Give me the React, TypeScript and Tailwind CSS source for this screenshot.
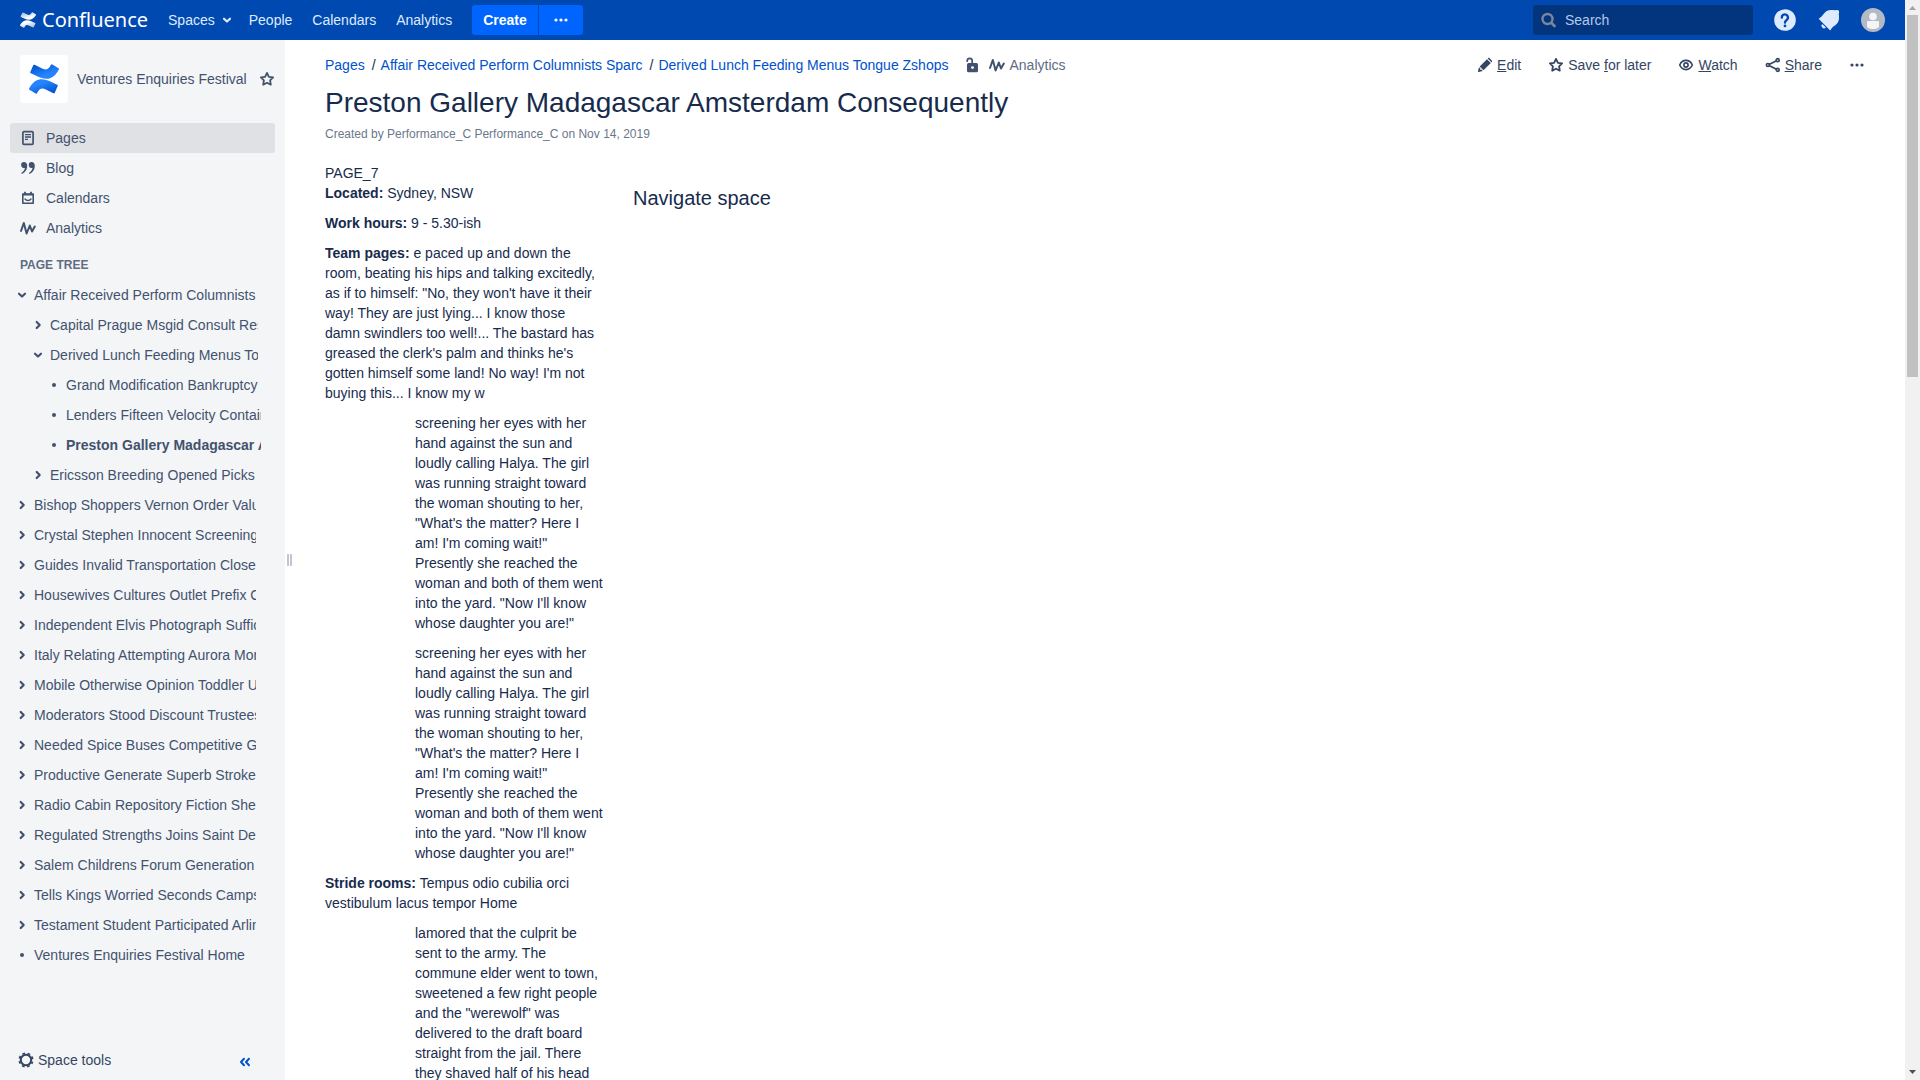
import React from "react";

type IconProps = { className?: string };

const markTop =
  "M23.131 5.743c.249-.405.531-.875.764-1.25a.764.764 0 0 0-.256-1.034L18.675.404a.764.764 0 0 0-1.058.26c-.195.335-.451.763-.734 1.225-1.966 3.246-3.945 2.85-7.508 1.146L4.437.694a.764.764 0 0 0-1.027.382L1.046 6.422a.764.764 0 0 0 .382 1c1.039.49 3.105 1.467 4.965 2.361 6.698 3.246 12.392 3.029 16.738-4.04z";
const markBottom =
  "M.87 18.257c-.248.382-.53.875-.763 1.245a.764.764 0 0 0 .255 1.04l4.965 3.054a.764.764 0 0 0 1.058-.26c.199-.332.454-.763.733-1.221 1.967-3.247 3.945-2.853 7.508-1.146l4.957 2.337a.764.764 0 0 0 1.028-.382l2.364-5.346a.764.764 0 0 0-.382-1 599.851 599.851 0 0 1-4.965-2.361C10.911 10.97 5.224 11.185.87 18.257z";

function ConfluenceMark({ id, dark, light, className }: { id: string; dark: string; light: string; className: string }) {
  return (
    <svg viewBox="0 0 24 24" className={"shrink-0 " + className} aria-hidden="true">
      <defs>
        <linearGradient id={id + "-a"} x1="0" y1="0" x2="0.7" y2="1">
          <stop offset="0.1" stopColor={dark} />
          <stop offset="0.75" stopColor={light} />
        </linearGradient>
        <linearGradient id={id + "-b"} x1="1" y1="1" x2="0.3" y2="0">
          <stop offset="0.1" stopColor={dark} />
          <stop offset="0.75" stopColor={light} />
        </linearGradient>
      </defs>
      <path d={markTop} fill={`url(#${id}-a)`} />
      <path d={markBottom} fill={`url(#${id}-b)`} />
    </svg>
  );
}

function Svg({ className = "size-4", children }: { className?: string; children: React.ReactNode }) {
  return (
    <svg
      viewBox="0 0 16 16"
      className={"shrink-0 " + className}
      fill="none"
      stroke="currentColor"
      strokeWidth="2"
      strokeLinecap="round"
      strokeLinejoin="round"
      aria-hidden="true"
    >
      {children}
    </svg>
  );
}

const ChevronDown = ({ className }: IconProps) => (
  <Svg className={className}>
    <path strokeWidth="2.2" d="M5 6.7 8 9.5l3-2.8" />
  </Svg>
);
const ChevronRight = ({ className }: IconProps) => (
  <Svg className={className}>
    <path strokeWidth="2.2" d="M6.7 5 9.7 8l-3 3" />
  </Svg>
);
const Bullet = () => (
  <Svg>
    <circle cx="8" cy="8" r="2" fill="currentColor" stroke="none" />
  </Svg>
);
const Dots = () => (
  <Svg>
    <g fill="currentColor" stroke="none">
      <circle cx="3" cy="8" r="1.6" />
      <circle cx="8" cy="8" r="1.6" />
      <circle cx="13" cy="8" r="1.6" />
    </g>
  </Svg>
);
const Star = () => (
  <Svg>
    <path strokeWidth="1.8" d="m8 1.9 1.900 3.900 4.200.600-3 3 .700 4.300L8 11.700l-3.800 2 .700-4.300-3-3 4.200-.600z" />
  </Svg>
);
const PageIcon = () => (
  <Svg>
    <rect x="2.900" y="1.700" width="10.200" height="12.600" rx="1" strokeWidth="1.700" />
    <path strokeWidth="1.300" strokeLinecap="butt" d="M5 4.700h6M5 7h6M5 9.300h3" />
  </Svg>
);
const QuoteIcon = () => (
  <Svg>
    <g fill="currentColor" stroke="none">
      <path d="M4 2a3 3 0 1 0 .9 5.900C4.700 9.800 3.500 11.400 1.600 12.700c-.5.400-.2 1.300.5 1.100C5.400 12.600 7.300 9.300 7.200 5.600 7.200 3.500 5.900 2 4 2z" />
      <path d="M11.600 2a3 3 0 1 0 .9 5.900c-.2 1.900-1.400 3.500-3.300 4.800-.5.400-.2 1.300.5 1.100 3.300-1.200 5.200-4.500 5.100-8.200C14.800 3.500 13.500 2 11.600 2z" />
    </g>
  </Svg>
);
const CalendarIcon = () => (
  <Svg>
    <path strokeWidth="1.600" d="M2.800 4h10.400v9.200H2.800z" />
    <path strokeWidth="1.800" strokeLinecap="butt" d="M2.800 4.700h10.400M5 1.800V4M11 1.800V4" />
    <path strokeWidth="1.400" d="M5 9c1.500 2 4.500 2 6 0" />
  </Svg>
);
const AnalyticsIcon = () => (
  <Svg>
    <path strokeWidth="2" d="M1 11 3.800 3l2.800 10.500L9.800 5.500l2.200 6L14.800 6.500" />
  </Svg>
);
const UnlockIcon = () => (
  <Svg>
    <rect x="2" y="6" width="11" height="9.200" rx="1.500" fill="currentColor" stroke="none" />
    <path strokeWidth="1.700" d="M2.200 4.200v-.4a2.500 2.500 0 0 1 5 0V6.500" />
    <circle cx="7.500" cy="10.600" r="1.400" fill="#fff" stroke="none" />
  </Svg>
);
const PencilIcon = () => (
  <Svg>
    <g fill="currentColor" stroke="none">
      <path d="M10 2.200 13.800 6 6.500 13.300 2.700 9.500z" />
      <path d="m10.700 1.500.4-.4c.5-.4 1-.4 1.500.1l2.200 2.200c.5.500.5 1 .1 1.500l-.400.400z" />
      <path d="m2 10.200 3.800 3.800-4.100.900c-.500.100-.800-.200-.700-.700z" />
    </g>
    <circle cx="3.600" cy="12.600" r=".5" fill="#fff" stroke="none" />
  </Svg>
);
const EyeIcon = () => (
  <Svg>
    <path strokeWidth="1.600" d="M1.700 8c1.300-3 3.600-4.600 6.300-4.600S13 5 14.300 8c-1.300 3-3.600 4.600-6.300 4.600S3 11 1.700 8z" />
    <circle cx="8" cy="8" r="2.100" strokeWidth="1.600" />
  </Svg>
);
const ShareIcon = () => (
  <Svg>
    <g strokeWidth="1.700">
      <path d="m4.500 7.200 6.500-3.300M4.500 8.800l6.500 3.300" />
      <circle cx="2.900" cy="8" r="1.500" />
      <circle cx="12.700" cy="3.200" r="1.500" />
      <circle cx="12.700" cy="12.800" r="1.500" />
    </g>
  </Svg>
);
const GearIcon = () => (
  <Svg>
    <circle cx="8" cy="8" r="5.200" strokeWidth="2" />
    <circle cx="8" cy="8" r="6.700" strokeWidth="1.700" strokeLinecap="butt" strokeDasharray="2.762 2.500" strokeDashoffset="1.300" transform="rotate(22.500 8 8)" />
  </Svg>
);

const topNav = ["People", "Calendars", "Analytics"];

function Header() {
  return (
    <header className="flex h-10 shrink-0 items-center gap-5 bg-[#0049b0] px-5 text-[#deebff]">
      <a href="#" aria-label="Confluence home" className="flex items-center gap-1.5 text-white">
        <ConfluenceMark id="top" dark="#9fbbe3" light="#ffffff" className="size-4" />
        <span className="font-['Noto_Sans',sans-serif] text-[20px] leading-10">Confluence</span>
      </a>
      <nav className="flex items-center gap-5" aria-label="Main">
        <a href="#" className="flex items-center gap-1">
          Spaces
          <ChevronDown className="size-4 -mr-1.5" />
        </a>
        {topNav.map((label) => (
          <a key={label} href="#">
            {label}
          </a>
        ))}
      </nav>
      <div className="flex gap-px">
        <button className="h-[30px] rounded-l-[3px] bg-[#0065ff] px-[11px] font-bold text-white">Create</button>
        <button aria-label="More create options" className="flex h-[30px] items-center rounded-r-[3px] bg-[#0065ff] px-[14px] text-white">
          <Dots />
        </button>
      </div>
      <form role="search" className="ml-auto flex h-[30px] w-[220px] items-center gap-2 rounded-[3px] bg-[#03357f] pl-2" onSubmit={(e) => e.preventDefault()}>
        <svg viewBox="0 0 16 16" className="size-4 shrink-0" fill="none" stroke="#7a869a" strokeWidth="2.400" strokeLinecap="round" aria-hidden="true">
          <circle cx="6.500" cy="7" r="5" />
          <path d="m10.500 11 3 3" strokeWidth="2.800" />
        </svg>
        <input aria-label="Search" placeholder="Search" className="w-full min-w-0 bg-transparent outline-none placeholder:text-[#b3c8ea]" />
      </form>
      <button aria-label="Help" className="flex size-6 items-center justify-center">
        <svg viewBox="0 0 24 24" className="size-6" aria-hidden="true">
          <circle cx="12" cy="12" r="10.800" fill="#deebff" />
          <path d="M8.800 9.500a3.100 3.100 0 1 1 4.900 2.500c-1.100.8-1.700 1.300-1.700 2.600" fill="none" stroke="#0049b0" strokeWidth="2.400" strokeLinecap="round" />
          <circle cx="12" cy="17.900" r="1.400" fill="#0049b0" />
        </svg>
      </button>
      <button aria-label="Notifications" className="flex size-6 items-center justify-center">
        <svg viewBox="0 0 24 24" className="size-6" fill="#deebff" aria-hidden="true">
          <path d="M2.300 10.200C5.500 9 6.600 4.700 9.800 3c3-1.600 6-.9 8.200-.8l2-.3c1.300-.1 2.200.8 2.100 2.100L21.800 6c.1 2.200.8 5.200-.8 8.200-1.700 3.200-6 4.300-7.200 7.500-.2.500-.7.600-1.100.2L2.100 11.300c-.4-.4-.3-.9.200-1.100z" />
          <path d="M5.200 15.900 8.900 19.600a2.400 2.400 0 0 1-3.700-3.700z" />
        </svg>
      </button>
      <button aria-label="User profile" className="size-6 overflow-hidden rounded-full bg-[#b3bac5]">
        <svg viewBox="0 0 24 24" className="size-6" fill="#f4f5f7" aria-hidden="true">
          <circle cx="12" cy="8.500" r="3.800" />
          <path d="M6 13.800c0-.5.400-.8.800-.8h10.400c.4 0 .8.300.8.800v4.200c0 2-2.500 3-6 3s-6-1-6-3z" />
        </svg>
      </button>
    </header>
  );
}

const shortcuts = [
  { label: "Pages", icon: <PageIcon />, active: true },
  { label: "Blog", icon: <QuoteIcon /> },
  { label: "Calendars", icon: <CalendarIcon /> },
  { label: "Analytics", icon: <AnalyticsIcon /> },
];

type Node = { label: string; level?: 1 | 2 | 3; state?: "open" | "leaf"; current?: boolean };

const tree: Node[] = [
  { label: "Affair Received Perform Columnists Sparc", state: "open" },
  { label: "Capital Prague Msgid Consult Results", level: 2 },
  { label: "Derived Lunch Feeding Menus Tongue Zshops", level: 2, state: "open" },
  { label: "Grand Modification Bankruptcy", level: 3, state: "leaf" },
  { label: "Lenders Fifteen Velocity Containing", level: 3, state: "leaf" },
  { label: "Preston Gallery Madagascar Amsterdam Consequently", level: 3, state: "leaf", current: true },
  { label: "Ericsson Breeding Opened Picks", level: 2 },
  { label: "Bishop Shoppers Vernon Order Value" },
  { label: "Crystal Stephen Innocent Screening" },
  { label: "Guides Invalid Transportation Close" },
  { label: "Housewives Cultures Outlet Prefix Co" },
  { label: "Independent Elvis Photograph Sufficient" },
  { label: "Italy Relating Attempting Aurora More" },
  { label: "Mobile Otherwise Opinion Toddler Un" },
  { label: "Moderators Stood Discount Trustees" },
  { label: "Needed Spice Buses Competitive Gr" },
  { label: "Productive Generate Superb Stroke" },
  { label: "Radio Cabin Repository Fiction She" },
  { label: "Regulated Strengths Joins Saint De" },
  { label: "Salem Childrens Forum Generation" },
  { label: "Tells Kings Worried Seconds Camps" },
  { label: "Testament Student Participated Arlington" },
  { label: "Ventures Enquiries Festival Home", state: "leaf" },
];

const levelStyle = {
  1: "pl-[14px] pr-[29px]",
  2: "pl-[30px] pr-[27px]",
  3: "pl-[46px] pr-6",
};

function TreeRow({ node }: { node: Node }) {
  return (
    <li className={"flex h-[30px] items-center gap-1 " + levelStyle[node.level ?? 1]}>
      {node.state === "leaf" ? (
        <Bullet />
      ) : (
        <button aria-label={(node.state === "open" ? "Collapse " : "Expand ") + node.label}>
          {node.state === "open" ? <ChevronDown /> : <ChevronRight />}
        </button>
      )}
      <a href="#" className={"min-w-0 flex-1 overflow-hidden whitespace-nowrap " + (node.current ? "font-bold" : "")}>
        {node.label}
      </a>
    </li>
  );
}

function Sidebar() {
  return (
    <aside className="flex w-[285px] shrink-0 flex-col bg-[#f4f5f7] text-[#42526e]">
      <div className="flex items-center pt-[15px] pl-5">
        <a href="#" aria-label="Space home" className="mr-[9px] flex size-12 shrink-0 items-center justify-center rounded-[3px] bg-white">
          <ConfluenceMark id="space" dark="#0052cc" light="#2684ff" className="size-[30px]" />
        </a>
        <a href="#" className="mr-3 whitespace-nowrap">Ventures Enquiries Festival</a>
        <button aria-label="Add to my spaces">
          <Star />
        </button>
      </div>
      <ul className="mt-5 px-2.5">
        {shortcuts.map((s) => (
          <li key={s.label}>
            <a href="#" className={"flex h-[30px] items-center gap-2.5 rounded-[3px] px-2.5 " + (s.active ? "bg-[#dfe1e5]" : "")}>
              {s.icon}
              {s.label}
            </a>
          </li>
        ))}
      </ul>
      <h2 className="mt-3 px-5 text-xs leading-5 font-bold text-[#5e6c84]">PAGE TREE</h2>
      <ul className="mt-[5px] min-h-0 flex-1 overflow-hidden">
        {tree.map((node) => (
          <TreeRow key={node.label} node={node} />
        ))}
      </ul>
      <div className="flex h-10 shrink-0 items-center justify-between pr-8 pl-[18px]">
        <button className="flex items-center gap-1 text-[#344563]">
          <GearIcon />
          Space tools
        </button>
        <button aria-label="Collapse sidebar" className="pt-1 text-[#0052cc]">
          <Svg>
            <path d="M7 4.800 4 8l3 3.200M12 4.800 9 8l3 3.200" />
          </Svg>
        </button>
      </div>
    </aside>
  );
}

function Splitter() {
  return (
    <div role="separator" aria-label="Resize sidebar" className="flex w-[9px] shrink-0 cursor-col-resize items-center justify-center gap-px">
      <span className="h-3 w-0.5 bg-[#c1c7d0]" />
      <span className="h-3 w-0.5 bg-[#c1c7d0]" />
    </div>
  );
}

const crumbs = ["Pages", "Affair Received Perform Columnists Sparc", "Derived Lunch Feeding Menus Tongue Zshops"];

function Breadcrumbs() {
  return (
    <div className="flex items-center">
      <ol className="flex">
        {crumbs.map((c, i) => (
          <li key={c}>
            {i > 0 && <span className="mr-[5px] ml-[7px]">/</span>}
            <a href="#" className="text-[#0052cc]">
              {c}
            </a>
          </li>
        ))}
      </ol>
      <a href="#" aria-label="Unrestricted" className="ml-[17px] text-[#42526e]">
        <UnlockIcon />
      </a>
      <a href="#" className="ml-2 flex items-center gap-1 text-[#5e6c84]">
        <span className="text-[#42526e]">
          <AnalyticsIcon />
        </span>
        Analytics
      </a>
    </div>
  );
}

function Actions() {
  return (
    <div className="flex items-center gap-[27px] text-[#344563]">
      <a href="#" className="flex items-center gap-1">
        <PencilIcon />
        <span><u>E</u>dit</span>
      </a>
      <button className="flex items-center gap-1">
        <Star />
        <span>Save <u>f</u>or later</span>
      </button>
      <button className="flex items-center gap-1">
        <EyeIcon />
        <span><u>W</u>atch</span>
      </button>
      <button className="flex items-center gap-1">
        <ShareIcon />
        <span><u>S</u>hare</span>
      </button>
      <button aria-label="More actions">
        <Dots />
      </button>
    </div>
  );
}

const screening =
  "screening her eyes with her hand against the sun and loudly calling Halya. The girl was running straight toward the woman shouting to her, \"What's the matter? Here I am! I'm coming wait!\" Presently she reached the woman and both of them went into the yard. \"Now I'll know whose daughter you are!\"";

function PageBody() {
  return (
    <div className="mt-[19px] flex items-start gap-[30px]">
      <div className="flex w-[278px] shrink-0 flex-col gap-2.5">
        <div>
          <p>PAGE_7</p>
          <p>
            <strong>Located:</strong> Sydney, NSW
          </p>
        </div>
        <p>
          <strong>Work hours:</strong> 9 - 5.30-ish
        </p>
        <p>
          <strong>Team pages:</strong> e paced up and down the room, beating his hips and talking excitedly, as if to himself: "No, they won't have it their
          way! They are just lying... I know those damn swindlers too well!... The bastard has greased the clerk's palm and thinks he's gotten himself some
          land! No way! I'm not buying this... I know my w
        </p>
        <p className="pl-[90px]">{screening}</p>
        <p className="pl-[90px]">{screening}</p>
        <p>
          <strong>Stride rooms:</strong> Tempus odio cubilia orci vestibulum lacus tempor Home
        </p>
        <p className="pl-[90px]">
          lamored that the culprit be sent to the army. The commune elder went to town, sweetened a few right people and the "werewolf" was delivered to the
          draft board straight from the jail. There they shaved half of his head
        </p>
      </div>
      <h2 className="mt-[23px] text-xl leading-6">Navigate space</h2>
    </div>
  );
}

function Scrollbar() {
  return (
    <div aria-hidden="true" className="flex w-[15px] shrink-0 flex-col items-center bg-[#f1f1f1]">
      <svg viewBox="0 0 15 15" className="h-[15px] w-[15px] shrink-0" fill="#a3a3a3">
        <path d="m4 10 3.500-4 3.500 4z" />
      </svg>
      <div className="flex w-full flex-1 flex-col items-center">
        <div className="h-[34.500%] w-[11px] bg-[#c1c1c1]" />
      </div>
      <svg viewBox="0 0 15 15" className="h-[15px] w-[15px] shrink-0" fill="#505050">
        <path d="M4 5h7L7.500 9z" />
      </svg>
    </div>
  );
}

export default function App() {
  return (
    <div className="flex h-screen overflow-hidden bg-white font-['Liberation_Sans',Arial,sans-serif] text-[14px] leading-5 text-[#172b4d]">
      <div className="flex min-w-0 flex-1 flex-col">
        <Header />
        <div className="flex min-h-0 flex-1">
          <Sidebar />
          <Splitter />
          <main className="min-w-0 flex-1 overflow-hidden pr-10 pl-[31px]">
            <div className="flex items-center justify-between pt-[15px]">
              <Breadcrumbs />
              <Actions />
            </div>
            <h1 className="mt-3 text-[28px] leading-8">Preston Gallery Madagascar Amsterdam Consequently</h1>
            <p className="mt-[5px] text-xs leading-5 text-[#6b778c]">Created by Performance_C Performance_C on Nov 14, 2019</p>
            <PageBody />
          </main>
        </div>
      </div>
      <Scrollbar />
    </div>
  );
}
